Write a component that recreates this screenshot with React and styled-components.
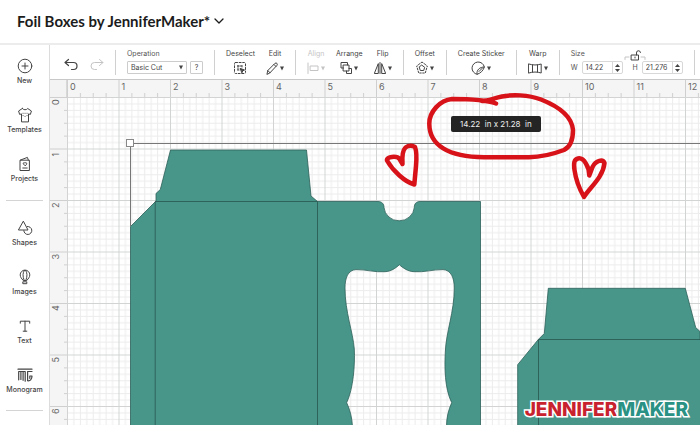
import React, { useEffect, useState } from 'react';
import styled, { createGlobalStyle } from 'styled-components';

const GlobalStyle = createGlobalStyle`
  * {
    box-sizing: border-box;
  }

  body {
    margin: 0;
    background: #fff;
    color: #444;
    font-family: Inter, 'Liberation Sans', sans-serif;
    font-size: 8px;
  }

  button, input, select {
    font: inherit;
    color: inherit;
  }
`;

const Page = styled.div`
  display: flex;
  flex-direction: column;
  height: 100vh;
  overflow: hidden;
`;

const Header = styled.header`
  display: flex;
  align-items: center;
  flex: none;
  height: 45px;
  padding: 0 17px 2px;
  border-bottom: 2px solid #ececec;
`;

const ProjectButton = styled.button`
  display: flex;
  align-items: center;
  gap: 4px;
  padding: 0;
  border: none;
  background: none;
  color: #1c1c1c;
  cursor: pointer;
`;

const Title = styled.span`
  font-family: Lato, 'Open Sans', sans-serif;
  font-size: 15px;
  font-weight: 700;
  line-height: 20px;
`;

const Body = styled.div`
  display: flex;
  flex: 1;
  min-height: 0;
`;

const Sidebar = styled.nav`
  flex: none;
  width: 50px;
  padding-top: 13px;
  border-right: 1px solid #dcdcdc;
  overflow: hidden;
`;

const SideButton = styled.button`
  display: flex;
  flex-direction: column;
  align-items: center;
  width: 100%;
  height: 49px;
  padding: 0;
  border: none;
  background: none;
  gap: 2px;
  font-size: 7px;
  font-weight: 500;
  line-height: 10px;
  cursor: pointer;

  svg {
    flex: none;
  }
`;

const SideRule = styled.hr`
  height: 1px;
  margin: ${({ $last }) => ($last ? '-6px 6px 0' : '-5px 6px 19px')};
  border: none;
  background: #d4d4d4;
`;

const Main = styled.main`
  display: flex;
  flex-direction: column;
  flex: 1;
  min-width: 0;
`;

const Toolbar = styled.div`
  display: flex;
  flex: none;
  gap: 11px;
  height: 35px;
  padding: 4px 0 0 13px;
  border-bottom: 1px solid #c8c8c8;
  font-size: 7px;
  overflow: hidden;
`;

const Divider = styled.div`
  flex: none;
  width: 1px;
  height: 25px;
  margin-top: 1px;
  background: #d0d0d0;
`;

const IconButton = styled.button`
  flex: none;
  width: 15px;
  padding: 4px 0 0;
  border: none;
  background: none;
  color: ${({ disabled }) => (disabled ? '#c4c4c4' : '#444')};
`;

const Group = styled.div`
  display: flex;
  flex-direction: column;
  flex: none;
  gap: 2px;
`;

const Label = styled.label`
  line-height: 10px;
  color: #555;
`;

const ToolButton = styled.button`
  display: flex;
  flex-direction: column;
  align-items: center;
  justify-content: flex-start;
  flex: none;
  gap: 2px;
  padding: 0;
  border: none;
  background: none;
  line-height: 10px;
  color: ${({ disabled }) => (disabled ? '#c4c4c4' : '#444')};
  white-space: nowrap;
  cursor: pointer;
`;

const ToolIcon = styled.span`
  display: flex;
  align-items: center;
  gap: 2px;
  height: 14px;
`;

const Row = styled.div`
  display: flex;
  align-items: center;
  gap: ${({ $gap }) => $gap}px;
`;

const SelectBox = styled.div`
  display: flex;
  position: relative;

  svg {
    position: absolute;
    right: 4px;
    top: 4px;
    pointer-events: none;
  }
`;

const Select = styled.select`
  appearance: none;
  width: 60px;
  height: 13px;
  padding: 0 3px;
  border: 1px solid #ccc;
  border-radius: 1px;
  background: #fff;
`;

const HelpButton = styled.button`
  width: 13px;
  height: 13px;
  padding: 0;
  border: 1px solid #ccc;
  border-radius: 1px;
  background: #fff;
  line-height: 10px;
`;

const SizeHead = styled.div`
  display: flex;
  justify-content: space-between;
  height: 10px;
  padding-right: 37px;
`;

const Field = styled.div`
  display: flex;
  align-items: center;
  width: 41px;
  height: 13px;
  border: 1px solid #d8d8d8;
  border-radius: 2px;
`;

const FieldInput = styled.input`
  flex: 1;
  width: 0;
  min-width: 0;
  height: 11px;
  padding: 0 0 0 3px;
  border: none;
  background: none;
  outline: none;
`;

const Stepper = styled.div`
  display: flex;
  flex-direction: column;
  justify-content: center;
  gap: 2px;
  width: 10px;
  height: 11px;
  border-left: 1px solid #d8d8d8;

  button {
    display: flex;
    justify-content: center;
    height: 3px;
    padding: 0;
    border: none;
    background: none;
  }
`;

const Workspace = styled.div`
  display: grid;
  grid-template-columns: 17px 1fr;
  grid-template-rows: 17px 1fr;
  flex: 1;
  min-height: 0;
`;

const RulerCorner = styled.div`
  background: #f3f3f3;
  border-right: 1px solid #d8d8d8;
`;

const Ruler = styled.svg`
  display: block;
  width: 100%;
  height: 100%;
  min-width: 0;
  min-height: 0;
  background: #f5f5f5;
  font-size: 9px;
  fill: #666;
`;

const Canvas = styled.div`
  position: relative;
  min-width: 0;
  min-height: 0;
`;

const Artwork = styled.svg`
  display: block;
  width: 100%;
  height: 100%;
`;

const Marks = styled.svg`
  position: absolute;
  inset: 0;
  width: 100%;
  height: 100%;
  overflow: visible;
  pointer-events: none;
`;

const SizeTip = styled.div`
  position: absolute;
  left: 384px;
  top: 19px;
  padding: 3px 9px;
  border-radius: 2px;
  background: #242424;
  color: #eee;
  line-height: 10px;
  white-space: pre;
`;

const Watermark = styled.a`
  position: absolute;
  right: 12px;
  bottom: 4px;
  color: #c9222f;
  font-size: 19px;
  font-weight: 800;
  line-height: 22px;
  text-decoration: none;
  -webkit-text-stroke: 3px #fff;
  paint-order: stroke fill;

  span {
    color: #2a9284;
  }
`;

const INCH = 51.5;

const Svg = ({ w = 14, h = 14, children }) => (
  <svg
    width={w}
    height={h}
    viewBox={`0 0 ${w} ${h}`}
    fill="none"
    stroke="currentColor"
    strokeWidth="1"
    strokeLinecap="round"
    strokeLinejoin="round"
    aria-hidden="true"
  >
    {children}
  </svg>
);

const Caret = () => (
  <svg width="4" height="5" viewBox="0 0 4 5" fill="currentColor" aria-hidden="true">
    <path d="M0 .5h4L2 4.500z" />
  </svg>
);

const sideIcons = {
  New: (
    <>
      <circle cx="8" cy="8" r="6.8" />
      <path d="M8 5v6M5 8h6" />
    </>
  ),
  Templates: (
    <>
      <path d="M5.3 1.5 1.6 4l1 3.4 1.9-.5v8h7v-8l1.9.5 1-3.4-3.7-2.5C9.5 3.2 6.5 3.2 5.3 1.5z" />
      <path d="M6 6.3h.1M8 6.3h.1M10 6.3h.1M6 8.6h.1M8 9.4h.1M10 8.6h.1" />
    </>
  ),
  Projects: (
    <>
      <path d="M3.4 4.2h9v10.3h-9zM3.6 4l6.8-2.6.9 2.6" />
      <path d="M8 9.6 6.3 7.9c-.5-1.3 1-1.7 1.7-.7.7-1 2.2-.6 1.7.7zM5.8 12h4.4" />
    </>
  ),
  Shapes: (
    <>
      <path d="M6.5 1.5 11 10H1.8z" />
      <path d="M10.3 6.5a4 4 0 1 1-3.5 4.2" />
    </>
  ),
  Images: (
    <>
      <path d="M6 11.2C4.6 9.4 3.2 8.2 3.2 5.9a4.8 4.8 0 0 1 9.6 0c0 2.3-1.4 3.5-2.8 5.3z" />
      <path d="M7 11C5.6 7 5.6 4 7.4 1.3M9 11c1.4-4 1.4-7-.4-9.700M6.2 12.8h3.600v1.900H6.200z" />
    </>
  ),
  Text: <path d="M3.3 5.2V3.2h9.4v2M8 3.2v10M6.2 13.200h3.600" />,
  Monogram: (
    <path
      strokeWidth="1.2"
      d="M1 2.200h14M1.700 4.500v8.300M1.700 4.500h6.500v9.700M3.900 4.500v8M6.100 4.500v8.800M15 4.500h-4.400v9.200c2.400.6 4.400-1.200 4.400-4.700h-2.200v2.300"
    />
  ),
};

const SideItem = ({ name }) => (
  <SideButton>
    <Svg w={16} h={16}>{sideIcons[name]}</Svg>
    {name}
  </SideButton>
);

const Tool = ({ name, icon, w = 12, disabled, caret = true }) => (
  <ToolButton disabled={disabled}>
    {name}
    <ToolIcon>
      <Svg w={w}>{icon}</Svg>
      {caret && <Caret />}
    </ToolIcon>
  </ToolButton>
);

const SizeField = ({ id, label, value, onChange }) => (
  <Row $gap={4}>
    <Label htmlFor={id}>{label}</Label>
    <Field>
      <FieldInput id={id} value={value} onChange={(e) => onChange(e.target.value)} />
      <Stepper>
        <button aria-label={`Increase ${label}`} onClick={() => onChange(String(Number(value) + 1))}>
          <svg width="5" height="3" fill="currentColor"><path d="M0 3h5L2.5 0z" /></svg>
        </button>
        <button aria-label={`Decrease ${label}`} onClick={() => onChange(String(Number(value) - 1))}>
          <svg width="5" height="3" fill="currentColor"><path d="M0 0h5L2.5 3z" /></svg>
        </button>
      </Stepper>
    </Field>
  </Row>
);

// whole inches that fit in the given length
const inchesIn = (length) => Array.from({ length: Math.ceil((length - 12) / INCH) }, (_, i) => i);

const TopRuler = ({ length }) => (
  <Ruler>
    <defs>
      <pattern id="ticksX" width={INCH} height="17" patternUnits="userSpaceOnUse">
        <path d="M.5 0v17M13.4 13v4M26.2 13v4M39.1 13v4" stroke="#cfcfcf" />
      </pattern>
    </defs>
    <rect width="100%" height="100%" fill="url(#ticksX)" />
    {inchesIn(length).map((n) => (
      <text key={n} x={n * INCH + 3} y="10">{n}</text>
    ))}
  </Ruler>
);

const LeftRuler = ({ length }) => (
  <Ruler>
    <defs>
      <pattern id="ticksY" width="17" height={INCH} patternUnits="userSpaceOnUse">
        <path d="M0 .5h17M14 13.4h3M14 26.2h3M14 39.1h3" stroke="#cfcfcf" />
      </pattern>
    </defs>
    <rect width="100%" height="100%" fill="url(#ticksY)" />
    {inchesIn(length).map((n) => (
      <text key={n} transform={`translate(9 ${n * INCH + 8}) rotate(-90)`}>{n}</text>
    ))}
  </Ruler>
);

// Shape coordinates are measured from the window corner, so both layers shift them back
const ORIGIN = 'translate(-67 -97)';

const BoxArtwork = () => (
  <Artwork>
    <defs>
      <pattern id="grid" width={INCH} height={INCH} patternUnits="userSpaceOnUse">
        <path
          d="M6.900 0v52M13.400 0v52M19.800 0v52M26.200 0v52M32.700 0v52M39.100 0v52M45.600 0v52M0 6.900h52M0 13.400h52M0 19.800h52M0 26.200h52M0 32.700h52M0 39.100h52M0 45.600h52"
          stroke="#ececec"
        />
        <path d="M.5 0v52M0 .5h52" stroke="#d2d4d4" />
      </pattern>
    </defs>
    <rect width="100%" height="100%" fill="#fff" />
    <rect width="100%" height="100%" fill="url(#grid)" />
    <g transform={ORIGIN} stroke="#2c5f58" strokeWidth=".8">
      <path
        fill="#48968a"
        fillRule="evenodd"
        d="M170.5 150H306.5L311 196L317.500 201.500H378C382 201.500 384 204 384 207.500A15.200 14.500 0 0 0 414.300 207.500C414.300 204 416 201.500 420 201.500H480.500V900H130.500V226.500L156 201V193.500L160.300 189.500Z
          M399.300 264.700C396 268 391 271.500 385 271.700C375 272.500 366 269.500 356 269.600C348 270 345 278 345 288C345 312 353 332 354.300 349C355 365 353.500 388 346.700 402.700C350 410 352 417 352.500 427V900H446.500V427C446.500 417 448.500 410 451.700 402.700C444.500 388 444.500 367 445.300 352C446 332 454.300 312 454.300 288C454.300 278 451 270 443 269.600C433 269.500 424 272.500 414 271.700C408 271.500 403 268 399.300 264.700Z"
      />
      <path
        fill="#48968a"
        d="M548.300 288.300H685.300L695.700 327.500L700 331.500V339.500H900V900H517.700V364.700L538.300 339.500L544.300 333.500Z"
      />
      <path d="M155.200 900V201.500H317.500V900M538.500 900V339.500H900" fill="none" stroke="#28564f" />
      <path d="M130.500 226V143.500H900" fill="none" stroke="#777" strokeWidth="1" />
      <rect x="126.500" y="139.500" width="7" height="7" fill="#fff" stroke="#888" strokeWidth="1" />
    </g>
  </Artwork>
);

const RedMarks = () => (
  <Marks fill="none" stroke="#d71218" strokeWidth="4.5" strokeLinecap="round" strokeLinejoin="round">
    <g transform={ORIGIN}>
      <path d="M496 103.500C488 100.500 474 99 452 99C440 100 429 112 429.300 124C429.500 145 448 157 484 157.300H529C545 157 556 153 564 150C570 147 573 139 573 130C572 117 560 107 541 99.500C528 94.500 512 94.500 502 96.500C494 98 488 101 482 101" />
      <path d="M402.500 164C402 157 402 151 405.500 147.500C408 145.800 412 145.500 415 147C417 152 416.500 160 416 166L414.300 184.500C405 182 393 171 387 160.500C386 156.500 397 155.500 399.500 159Z" />
      <path d="M589.300 175.500C589.500 168 584 157 578 158.500C574 159.500 573.500 163 574.500 170C576 181 580 190 584 197C589 188 603 178 604.500 163C603 159 596 160 592.500 167Z" />
    </g>
  </Marks>
);

const App = () => {
  const [width, setWidth] = useState('14.22');
  const [height, setHeight] = useState('21.276');
  const [view, setView] = useState({ w: window.innerWidth, h: window.innerHeight });

  useEffect(() => {
    const onResize = () => setView({ w: window.innerWidth, h: window.innerHeight });
    window.addEventListener('resize', onResize);
    return () => window.removeEventListener('resize', onResize);
  }, []);

  return (
    <Page>
      <GlobalStyle />
      <Header>
        <ProjectButton>
          <Title>Foil Boxes by JenniferMaker*</Title>
          <Svg w={10} h={8}><path d="M1 2l4 4 4-4" strokeWidth="1.3" /></Svg>
        </ProjectButton>
      </Header>
      <Body>
        <Sidebar>
          {['New', 'Templates', 'Projects'].map((name) => <SideItem key={name} name={name} />)}
          <SideRule />
          {['Shapes', 'Images', 'Text', 'Monogram'].map((name) => <SideItem key={name} name={name} />)}
          <SideRule $last />
        </Sidebar>
        <Main>
          <Toolbar>
            <IconButton aria-label="Undo">
              <Svg><path d="M4.500 1.500 1 4.500l3.500 3M1 4.500h8.500a3.500 3.500 0 0 1 0 7H7.500" strokeWidth="1.2" /></Svg>
            </IconButton>
            <IconButton aria-label="Redo" disabled>
              <Svg><path d="M9.500 1.500 13 4.500l-3.500 3M13 4.500H4.500a3.500 3.500 0 0 0 0 7H6.500" /></Svg>
            </IconButton>
            <Divider />
            <Group>
              <Label htmlFor="operation">Operation</Label>
              <Row $gap={3}>
                <SelectBox>
                  <Select id="operation">
                    <option>Basic Cut</option>
                  </Select>
                  <Caret />
                </SelectBox>
                <HelpButton>?</HelpButton>
              </Row>
            </Group>
            <Divider />
            <Tool
              name="Deselect"
              w={14}
              caret={false}
              icon={
                <>
                  <rect x="1.5" y="1.5" width="11" height="11" rx="1" strokeDasharray="2 1.6" />
                  <path d="M5 4.500v5M4.500 5h5M4.500 9h2M9 4.500v2" strokeDasharray="1.5 1" />
                  <path d="M7.500 7.500l4 1.500-1.700.8-.8 1.700z" fill="currentColor" />
                </>
              }
            />
            <Tool
              name="Edit"
              icon={<path d="M1 13l.8-3.500L9 2.300c1.500-1 3 .6 2 2L4 11.800zM8 3.500l2 2M1.800 9.500 4 11.800" />}
            />
            <Divider />
            <Tool name="Align" disabled icon={<path d="M1 2v10.500M3.500 5h7.500v4.500H3.500z" />} />
            <Tool
              name="Arrange"
              icon={<path d="M3.500 7H1V1.500h6.500V4M3.500 4H9v6H3.500zM9 7.500h2.500v5H6.500V10" />}
            />
            <Tool name="Flip" icon={<path d="M6 1.500v11M4.300 3v9.500H.7zM7.700 3v9.500h3.600z" />} />
            <Divider />
            <Tool
              name="Offset"
              icon={
                <>
                  <path d="M6 1l5.300 4-2 7H2.700l-2-7z" strokeDasharray="1.5 1.5" />
                  <path d="M6 4.300l2.700 2-1 3.200H4.300l-1-3.200z" />
                </>
              }
            />
            <Divider />
            <Tool
              name="Create Sticker"
              w={14}
              icon={<path d="M6 13.300A6.200 6.200 0 1 1 13.300 6c-.8 3.400-4 6.500-7.300 7.300C5.500 9 8.500 6 13.300 6M8 10.500 11.500 7" />}
            />
            <Divider />
            <Tool
              name="Warp"
              w={14}
              icon={<path d="M.8 3c4 1.300 8.500 1.300 12.400 0v9C9.300 10.700 4.800 10.700.8 12zM4.500 4v7M9.500 4v7" />}
            />
            <Divider />
            <Group>
              <SizeHead>
                <Label as="span">Size</Label>
                <Svg w={22} h={12}>
                  <path d="M1 10.500V8h4M17 8h4v2.500" stroke="#c4c4c4" />
                  <path d="M7.500 6h7v5h-7zM11 8v1M12.500 6V4a2 2 0 0 1 4-.5" />
                </Svg>
              </SizeHead>
              <Row $gap={10}>
                <SizeField id="width" label="W" value={width} onChange={setWidth} />
                <SizeField id="height" label="H" value={height} onChange={setHeight} />
              </Row>
            </Group>
            <Divider />
          </Toolbar>
          <Workspace>
            <RulerCorner />
            <TopRuler length={view.w - 67} />
            <LeftRuler length={view.h - 97} />
            <Canvas>
              <BoxArtwork />
              <SizeTip>14.22  in x 21.28  in</SizeTip>
              <RedMarks />
              <Watermark href="#">JENNIFER<span>MAKER</span></Watermark>
            </Canvas>
          </Workspace>
        </Main>
      </Body>
    </Page>
  );
};

export default App;
